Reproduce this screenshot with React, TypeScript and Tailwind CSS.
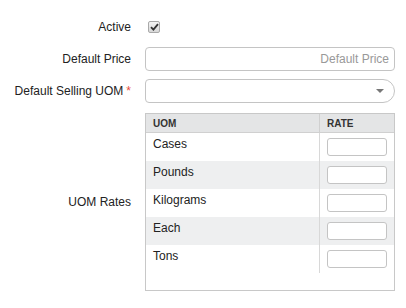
import { FC, ReactNode } from 'react';

const uoms = ['Cases', 'Pounds', 'Kilograms', 'Each', 'Tons'];

const FormRow: FC<{ label: ReactNode; children: ReactNode; className?: string }> = ({ label, children, className }) => (
    <div className={`flex items-center ${className ?? ''}`}>
        <div className="w-[131px] shrink-0 text-right">{label}</div>
        <div className="ml-[14px] w-[250px]">{children}</div>
    </div>
);

export default function App() {
    return (
        <div
            className="h-[308px] w-[406px] bg-white pt-[15px] text-[12px] text-[#222]"
            style={{ fontFamily: '"Liberation Sans", Arial, sans-serif' }}
        >
            <FormRow label="Active" className="h-[24px]">
                <span className="ml-[3px] flex h-[12px] w-[12px] items-center justify-center rounded-[2px] border border-[#a9a9a9] bg-gradient-to-b from-[#f4f4f4] to-[#d8d8d8]">
                    <svg width="9" height="8" viewBox="0 0 9 8">
                        <path d="M1 4.2 L3.4 6.6 L8 1.2" fill="none" stroke="#333" strokeWidth="1.8" />
                    </svg>
                </span>
            </FormRow>

            <FormRow label="Default Price" className="mt-[8px] h-[24px]">
                <input
                    placeholder="Default Price"
                    className="h-[24px] w-full rounded-[4px] border border-[#c4c4c4] bg-white px-[5px] text-right text-[12px] outline-none placeholder:text-[#999]"
                />
            </FormRow>

            <FormRow
                label={
                    <>
                        Default Selling UOM<span className="ml-[3px] text-[#e74c3c]">*</span>
                    </>
                }
                className="mt-[8px] h-[24px]"
            >
                <div className="flex h-[24px] w-full items-center justify-end rounded-l-[4px] rounded-r-[12px] border border-[#c4c4c4] bg-white pr-[10px]">
                    <svg width="8" height="4" viewBox="0 0 8 4">
                        <path d="M0 0 L8 0 L4 4 Z" fill="#777" />
                    </svg>
                </div>
            </FormRow>

            <FormRow label="UOM Rates" className="mt-[10px]">
                <div className="h-[178px] w-full border border-[#c8c8c8] bg-white">
                    <div className="flex h-[19px] border-b border-[#d0d0d0] bg-[#e4e5e6] text-[10px] font-bold leading-[19px] text-[#333]">
                        <div className="flex-1 pl-[7px]">UOM</div>
                        <div className="w-[75px] border-l border-[#d0d0d0] pl-[7px]">RATE</div>
                    </div>
                    {uoms.map((uom, i) => (
                        <div key={uom} className={`flex h-[28px] ${i % 2 === 1 ? 'bg-[#eeeff0]' : 'bg-white'}`}>
                            <div className="flex-1 pl-[7px] pt-[3px] text-[12px] leading-[16px]">{uom}</div>
                            <div className="w-[75px] border-l border-[#d8d8d8] pl-[7px] pt-[5px]">
                                <input className="h-[18px] w-[60px] rounded-[3px] border border-[#c4c4c4] bg-white outline-none" />
                            </div>
                        </div>
                    ))}
                </div>
            </FormRow>
        </div>
    );
}
